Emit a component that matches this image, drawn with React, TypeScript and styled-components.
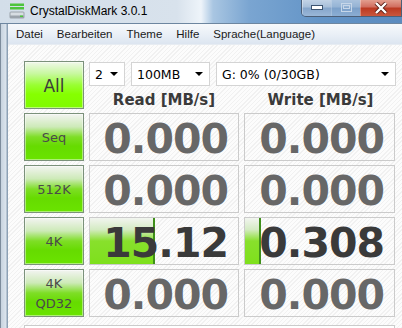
import React from 'react';
import styled, { createGlobalStyle, css } from 'styled-components';

const GlobalStyle = createGlobalStyle`
  html, body {
    margin: 0;
    padding: 0;
    background: #ffffff;
  }
  body {
    font-family: 'DejaVu Sans', sans-serif;
  }
`;

const Window = styled.div`
  width: 402px;
  height: 328px;
  overflow: hidden;
  display: flex;
  flex-direction: column;
  background: #d4dfea;
`;

const TitleBar = styled.div`
  height: 23px;
  flex: none;
  display: flex;
  align-items: flex-start;
  background: linear-gradient(
    to right,
    #d3dee9 0%,
    #d8e2ec 44%,
    #eef4fa 50%,
    #a9c6e2 53%,
    #7aa5d1 62%,
    #6394c7 80%,
    #5b8bbf 100%
  );
  border-bottom: 1px solid #6d86a0;
`;

const AppIcon = styled.svg`
  margin: 3px 0 0 9px;
  flex: none;
`;

const TitleText = styled.div`
  margin: 4px 0 0 5px;
  font-family: 'Liberation Sans', sans-serif;
  font-size: 12px;
  line-height: 15px;
  color: #000;
  flex: 1;
`;

const CaptionButtons = styled.div`
  display: flex;
  flex: none;
  margin-top: -1px;
  border: 1px solid #4c5f78;
  border-top: none;
  border-radius: 0 0 0 5px;
  overflow: hidden;
  height: 17px;
`;

const CaptionButton = styled.div<{ $kind: 'min' | 'max' | 'close' }>`
  height: 17px;
  display: flex;
  align-items: center;
  justify-content: center;
  border-left: 1px solid rgba(255, 255, 255, 0.35);
  ${({ $kind }) =>
    $kind === 'close'
      ? css`
          width: 40px;
          background: linear-gradient(#e5a595 0%, #d27061 45%, #bc3a22 55%, #c9573d 100%);
        `
      : css`
          width: 28px;
          background: linear-gradient(#c6d6e8 0%, #a9c0da 45%, #86a6cb 55%, #9ab7d8 100%);
          opacity: ${$kind === 'max' ? 0.75 : 1};
        `}
`;

const Body = styled.div`
  flex: 1;
  display: flex;
  min-height: 0;
`;

const LeftFrame = styled.div`
  width: 8px;
  flex: none;
  background: linear-gradient(to right, #7d8c9c 0, #7d8c9c 1px, #c7d3df 1px, #dbe4ed 6px, #8da1b5 7px);
`;

const Client = styled.div`
  flex: 1;
  display: flex;
  flex-direction: column;
  min-width: 0;
`;

const MenuBar = styled.div`
  height: 20px;
  flex: none;
  display: flex;
  align-items: center;
  padding-left: 8px;
  gap: 14px;
  background: linear-gradient(#f7f9fc 0%, #eaf0f7 50%, #dce5f0 100%);
  border-bottom: 1px solid #e7ecf2;
`;

const MenuItem = styled.span`
  font-family: 'Liberation Sans', sans-serif;
  font-size: 11.5px;
  color: #1a1a1a;
`;

const Content = styled.div`
  flex: 1;
  padding: 16px 0 0 16px;
  background: repeating-linear-gradient(
    -45deg,
    #fcfcfc 0px,
    #fcfcfc 2px,
    #f1f1f1 2px,
    #f1f1f1 3px
  );
`;

const Grid = styled.div`
  display: grid;
  grid-template-columns: 60px 150px 151px;
  grid-auto-rows: 48px;
  column-gap: 5px;
  row-gap: 4px;
`;

const TestButton = styled.div<{ $all?: boolean }>`
  box-sizing: border-box;
  border: 1px solid #7b917b;
  box-shadow: inset 0 0 0 1px rgba(255, 255, 255, 0.45);
  display: flex;
  flex-direction: column;
  align-items: center;
  justify-content: center;
  color: #4a4a4a;
  font-size: 13px;
  line-height: 20px;
  padding-top: 1px;
  ${({ $all }) =>
    $all
      ? css`
          background: linear-gradient(#f0f8ea 0%, #c8f8a0 25%, #99ff33 50%, #86ff00 70%, #80fb00 100%);
          font-size: 17px;
          color: #3b3b3b;
        `
      : css`
          background: linear-gradient(#f3f4f2 0%, #cdeab8 28%, #7ede26 50%, #66db00 70%, #6ae400 100%);
        `}
`;

const TopArea = styled.div`
  grid-column: 2 / span 2;
  display: grid;
  grid-template-columns: 150px 151px;
  grid-template-rows: 24px 24px;
  column-gap: 6px;
`;

const Selects = styled.div`
  grid-column: 1 / span 2;
  display: flex;
  gap: 6px;
  padding-top: 1px;
`;

const Select = styled.div<{ $w: number }>`
  box-sizing: border-box;
  width: ${({ $w }) => $w}px;
  height: 24px;
  background: #ffffff;
  border: 1px solid #d4d4d4;
  display: flex;
  align-items: center;
  padding: 0 6px 0 5px;
  font-size: 12.5px;
  color: #000;
`;

const SelectLabel = styled.span`
  flex: 1;
`;

const Arrow = styled.span`
  width: 0;
  height: 0;
  border-left: 4px solid transparent;
  border-right: 4px solid transparent;
  border-top: 4px solid #000;
`;

const Header = styled.div`
  display: flex;
  align-items: center;
  justify-content: center;
  font-weight: bold;
  font-size: 15px;
  color: #3a3a3a;
  padding-top: 5px;
`;

const ValueBox = styled.div<{ $active?: boolean }>`
  position: relative;
  box-sizing: border-box;
  border: 1px solid #cbcbcb;
  display: flex;
  align-items: center;
  justify-content: flex-end;
  padding-right: 10px;
  overflow: hidden;
  font-weight: bold;
  font-size: 41px;
  letter-spacing: -1px;
  color: ${({ $active }) => ($active ? '#3a3a3a' : '#676767')};
`;

const Bar = styled.div`
  position: absolute;
  left: 0;
  top: 0;
  bottom: 0;
  background: linear-gradient(#f2f5f0 0%, #d4ebc3 25%, #88e02c 50%, #7ee01c 100%);
  border-right: 2px solid #3f8f1a;
`;

const ValueText = styled.span`
  position: relative;
  padding-top: 3px;
`;

const CommentField = styled.div`
  grid-column: 1 / -1;
  margin-top: 4px;
  border: 1px solid #cbcbcb;
  background: #ffffff;
`;

interface Row {
  label: string[];
  read: string;
  write: string;
  readBar?: number;
  writeBar?: number;
}

const rows: Row[] = [
  { label: ['Seq'], read: '0.000', write: '0.000' },
  { label: ['512K'], read: '0.000', write: '0.000' },
  { label: ['4K'], read: '15.12', write: '0.308', readBar: 63, writeBar: 14 },
  { label: ['4K', 'QD32'], read: '0.000', write: '0.000' },
];

const DiskIcon = () => (
  <AppIcon width="16" height="16" viewBox="0 0 16 16">
    <rect x="1" y="0.5" width="14" height="2.5" fill="#4cc43c" />
    <rect x="1" y="4" width="14" height="2.5" fill="#4cc43c" />
    <rect x="0.5" y="8.5" width="15" height="7" rx="1.5" fill="#9ba3ab" />
    <rect x="1.5" y="9.5" width="13" height="3" fill="#d7dde2" />
    <rect x="11" y="12.5" width="3" height="1.5" fill="#4cc43c" />
  </AppIcon>
);

const Cell: React.FC<{ value: string; bar?: number }> = ({ value, bar }) => (
  <ValueBox $active={value !== '0.000'}>
    {bar ? <Bar style={{ width: `${bar}px` }} /> : null}
    <ValueText>{value}</ValueText>
  </ValueBox>
);

export default function App() {
  return (
    <>
      <GlobalStyle />
      <Window>
        <TitleBar>
          <DiskIcon />
          <TitleText>CrystalDiskMark 3.0.1</TitleText>
          <CaptionButtons>
            <CaptionButton $kind="min">
              <svg width="12" height="5" viewBox="0 0 12 5">
                <rect x="0.5" y="0.5" width="11" height="4" fill="#fff" stroke="#3d5470" />
              </svg>
            </CaptionButton>
            <CaptionButton $kind="max">
              <svg width="11" height="9" viewBox="0 0 11 9">
                <rect x="0.5" y="0.5" width="10" height="8" fill="none" stroke="#e8eef5" />
                <rect x="2.5" y="2.5" width="6" height="3" fill="none" stroke="#e8eef5" />
              </svg>
            </CaptionButton>
            <CaptionButton $kind="close">
              <svg width="14" height="12" viewBox="0 0 14 12">
                <path d="M2 1 L12 11 M12 1 L2 11" stroke="#5a2018" strokeWidth="4" />
                <path d="M2 1 L12 11 M12 1 L2 11" stroke="#ffffff" strokeWidth="2.4" />
              </svg>
            </CaptionButton>
          </CaptionButtons>
        </TitleBar>
        <Body>
          <LeftFrame />
          <Client>
            <MenuBar>
              <MenuItem>Datei</MenuItem>
              <MenuItem>Bearbeiten</MenuItem>
              <MenuItem>Theme</MenuItem>
              <MenuItem>Hilfe</MenuItem>
              <MenuItem>Sprache(Language)</MenuItem>
            </MenuBar>
            <Content>
              <Grid>
                <TestButton $all>All</TestButton>
                <TopArea>
                  <Selects>
                    <Select $w={36}>
                      <SelectLabel>2</SelectLabel>
                      <Arrow />
                    </Select>
                    <Select $w={79}>
                      <SelectLabel>100MB</SelectLabel>
                      <Arrow />
                    </Select>
                    <Select $w={180}>
                      <SelectLabel>G: 0% (0/30GB)</SelectLabel>
                      <Arrow />
                    </Select>
                  </Selects>
                  <Header>Read [MB/s]</Header>
                  <Header>Write [MB/s]</Header>
                </TopArea>
                {rows.map((row) => (
                  <React.Fragment key={row.label.join('-')}>
                    <TestButton>
                      {row.label.map((l) => (
                        <span key={l}>{l}</span>
                      ))}
                    </TestButton>
                    <Cell value={row.read} bar={row.readBar} />
                    <Cell value={row.write} bar={row.writeBar} />
                  </React.Fragment>
                ))}
                <CommentField />
              </Grid>
            </Content>
          </Client>
        </Body>
      </Window>
    </>
  );
}
